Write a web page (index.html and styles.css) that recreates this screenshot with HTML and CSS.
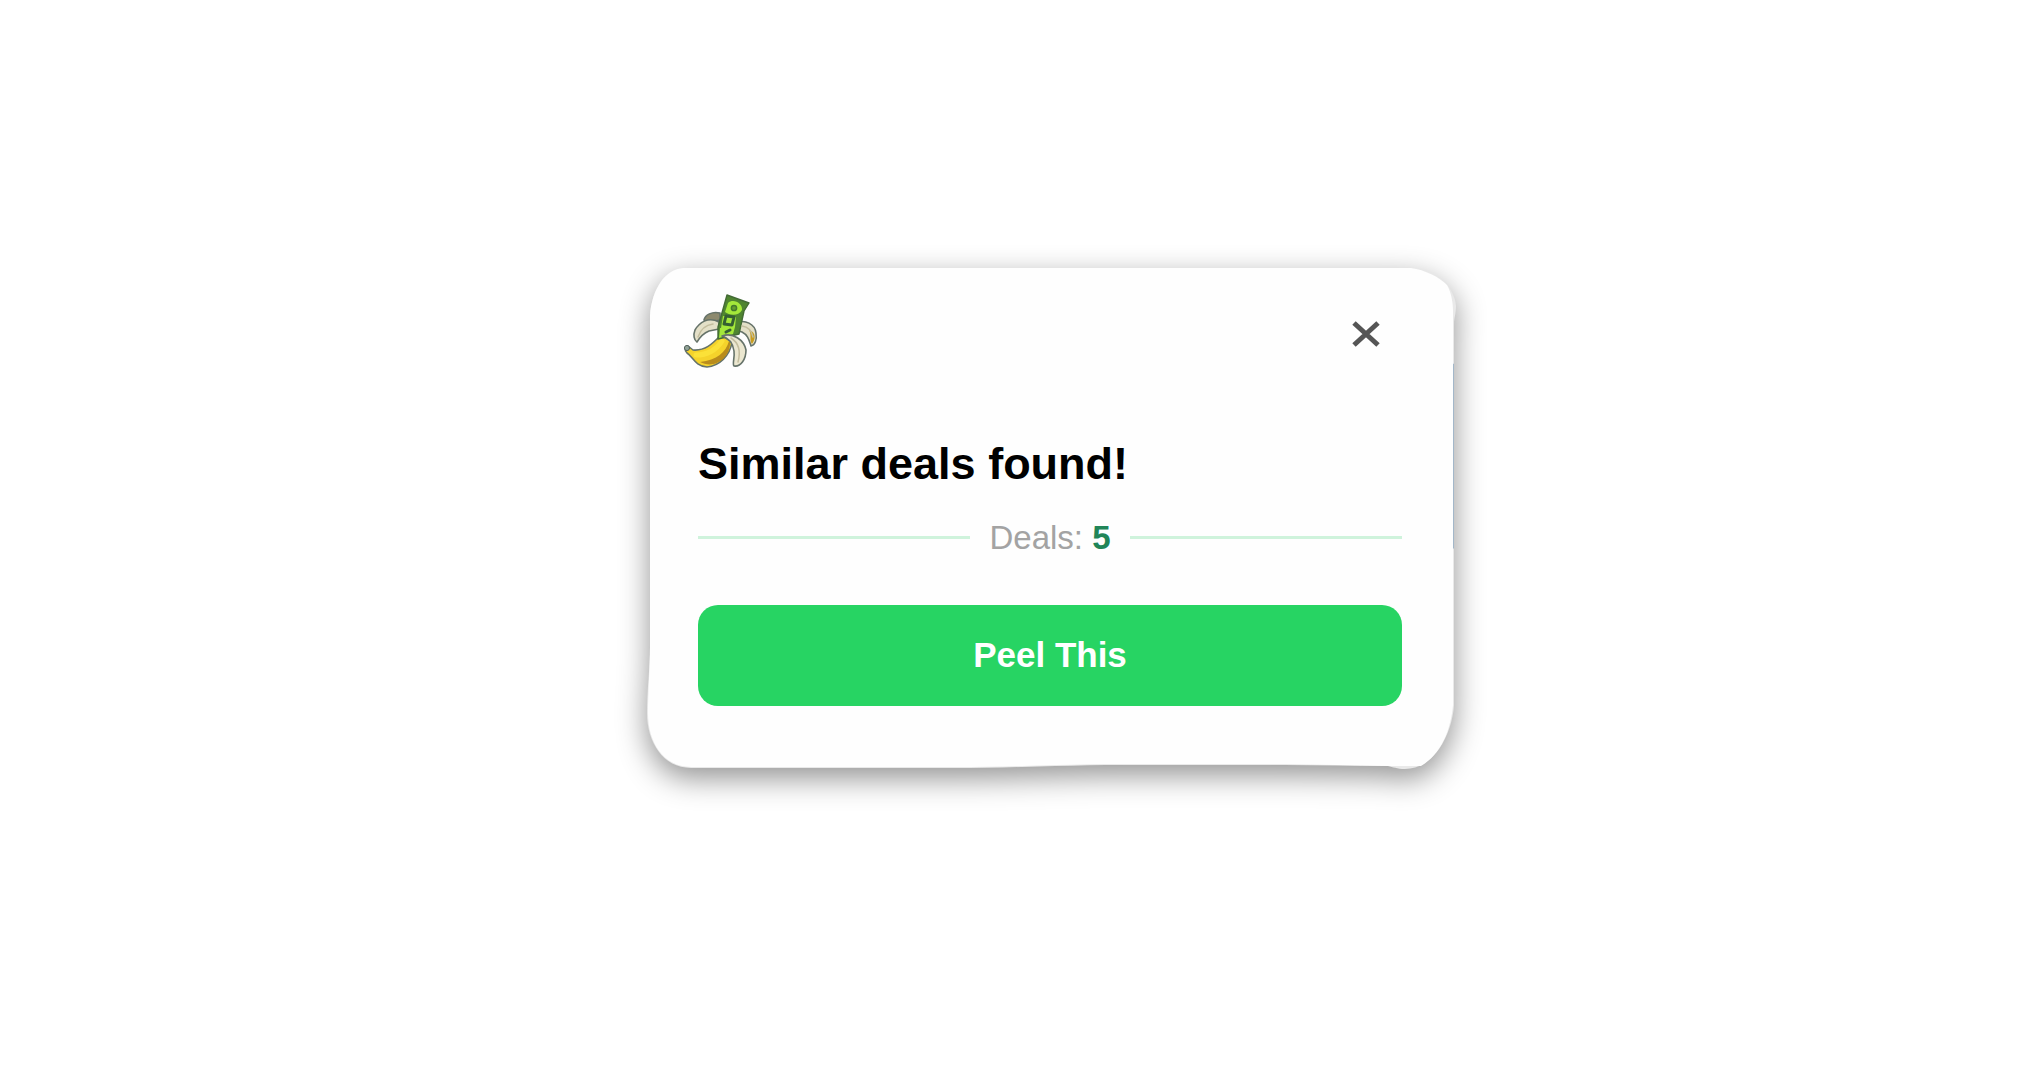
FILE: index.html
```
<!DOCTYPE html>
<html lang="en">
<head>
  <meta charset="utf-8">
  <meta name="viewport" content="width=device-width, initial-scale=1">
  <title>Similar deals found!</title>
  <link rel="stylesheet" href="styles.css">
</head>
<body>
  <main class="stage">
    <section class="card" role="dialog" aria-labelledby="card-title">
      <svg class="card-shape" viewBox="0 0 804 500" preserveAspectRatio="none" aria-hidden="true">
        <path fill="#e9e9e9" d="M34 0H762C788 2 806 20 807 38C807 46 805 50 805 56V438C803 468 785 502 756 502C748 502 744 500 739 499L636 498H456C400 499 350 501 286 501H42C14 501 -2 475 -2 446C-2 425 1 400 1 380V48C3 20 17 1 34 0Z"/>
        <path fill="#fefefe" d="M34 0H762C776 2 790 9 798 17C802 24 804 34 804 44V438C802 462 792 488 772 499H739L636 497H456C400 498 350 500 286 500H42C14 500 -1 475 -1 446C-1 425 1 400 1 380V48C3 20 17 1 34 0Z"/>
        <path fill="#a3b7c9" d="M804 96h1v185h-1z"/>
      </svg>

      <header class="card-header">
        <svg class="logo" viewBox="0 0 90 90" role="img" aria-label="Banana with a banknote" stroke-linejoin="round" stroke-linecap="round">
          <g stroke="#66736a" stroke-width="1.6">
            <path fill="#8d8a6e" d="M44 27C36 25 29 29 28 34L31 37L44 34Z"/>
            <path fill="#e4e0c8" d="M43 36C32 30 23 37 19 44C17 49 18 54 21 56C24 51 28 47 33 45L43 43Z"/>
            <path fill="#e4e0c8" d="M60 37C69 33 79 38 80 47C81 54 79 59 75 60C73 54 72 49 66 46L59 44Z"/>
            <path fill="#c79c20" stroke="none" d="M73 44C80 46 80 53 76 58C73 54 76 49 73 44Z"/>
            <path fill="#f5d32b" d="M45 49C37 57 30 65 17 64L12 60C9 61 8 64 11 67C17 71 19 80 31 81C43 80 54 70 56 56Z"/>
          </g>
          <path fill="#b98c1c" d="M53 55C50 66 41 74 24 76C39 84 55 71 54 56Z"/>
          <path fill="none" stroke="#fbe138" stroke-width="5" d="M46 55C40 64 32 69 20 69"/>
          <circle cx="11" cy="62" r="2.6" fill="#91a296" stroke="#52615c"/>
          <path fill="#4f8530" stroke="#436b35" stroke-width="1.4" d="M51 9L73 17L68 25L63 48L42 53L42 41Z"/>
          <path fill="#a4e83a" d="M52 17C57 12 67 17 66 24C62 31 53 29 49 26ZM47 30L60 31L59 41L45 42ZM44 42L59 41L57 48L43 52Z"/>
          <path fill="none" stroke="#355f32" stroke-width="3" stroke-linejoin="round" d="M50 30L58 31L56 39L48 38ZM50 46L54 44"/>
          <circle cx="58" cy="22" r="2.6" fill="#659f2f" stroke="#447a2b" stroke-width="1.5"/>
          <path fill="#ebe7d0" stroke="#66736a" stroke-width="1.6" d="M46 50C57 46 68 54 70 64C70 73 65 81 58 80C56 78 59 72 58 65C57 58 53 52 46 50Z"/>
          <path fill="none" stroke="#c3bd9e" stroke-width="1.5" d="M55 52C63 57 65 65 62 76M37 38C29 39 24 45 22 51M66 40C73 41 76 46 77 51"/>
        </svg>
        <button class="close" type="button" aria-label="Close">
          <svg viewBox="0 0 30 30" aria-hidden="true"><path d="M3 4L27 26M27 4L3 26"/></svg>
        </button>
      </header>

      <div class="card-body">
        <h1 class="title" id="card-title">Similar deals found!</h1>
        <p class="count">Deals:&nbsp;<strong>5</strong></p>
        <button class="action" type="button">Peel This</button>
      </div>
    </section>
  </main>
</body>
</html>
```
FILE: styles.css
```
* {
  box-sizing: border-box;
}

body {
  margin: 0;
  background: #fff;
  font-family: "Liberation Sans", Arial, sans-serif;
}

.stage {
  display: flex;
  align-items: center;
  justify-content: center;
  min-height: 100vh;
  padding: 0 0 46px 82px;
}

.card {
  position: relative;
  width: 100%;
  max-width: 804px;
  padding: 18px 51px 61px 49px;
}

.card-shape {
  position: absolute;
  z-index: -1;
  inset: 0;
  width: 100%;
  height: 100%;
  overflow: visible;
  filter: drop-shadow(0 10px 15px rgba(0, 0, 0, 0.43));
}

.card-header {
  display: flex;
  align-items: center;
  justify-content: space-between;
  margin: 0 12px 0 -22px;
}

.logo {
  width: 90px;
  height: 90px;
}

.close {
  display: flex;
  margin-top: 6px;
  padding: 9px;
  border: 0;
  background: none;
  cursor: pointer;
}

.close svg {
  width: 30px;
  height: 30px;
  fill: none;
  stroke: #555;
  stroke-width: 5;
}

.card-body {
  display: flex;
  flex-direction: column;
  padding-top: 60px;
}

.title {
  margin: 0 0 24px;
  color: #000;
  font-size: 45px;
  line-height: 56px;
}

.count {
  display: flex;
  align-items: center;
  margin: 0 0 45px;
  color: #a3a3a3;
  font-size: 33px;
  line-height: 44px;
}

.count::before,
.count::after {
  content: "";
  flex: 1;
  height: 3px;
  background: #cff3dc;
}

.count::before {
  margin-right: 19px;
}

.count::after {
  margin-left: 19px;
}

.count strong {
  color: #218558;
}

.action {
  height: 101px;
  border: 0;
  border-radius: 20px;
  background: #27d463;
  color: #fff;
  font: bold 35px/44px "Liberation Sans", Arial, sans-serif;
  cursor: pointer;
}
```
